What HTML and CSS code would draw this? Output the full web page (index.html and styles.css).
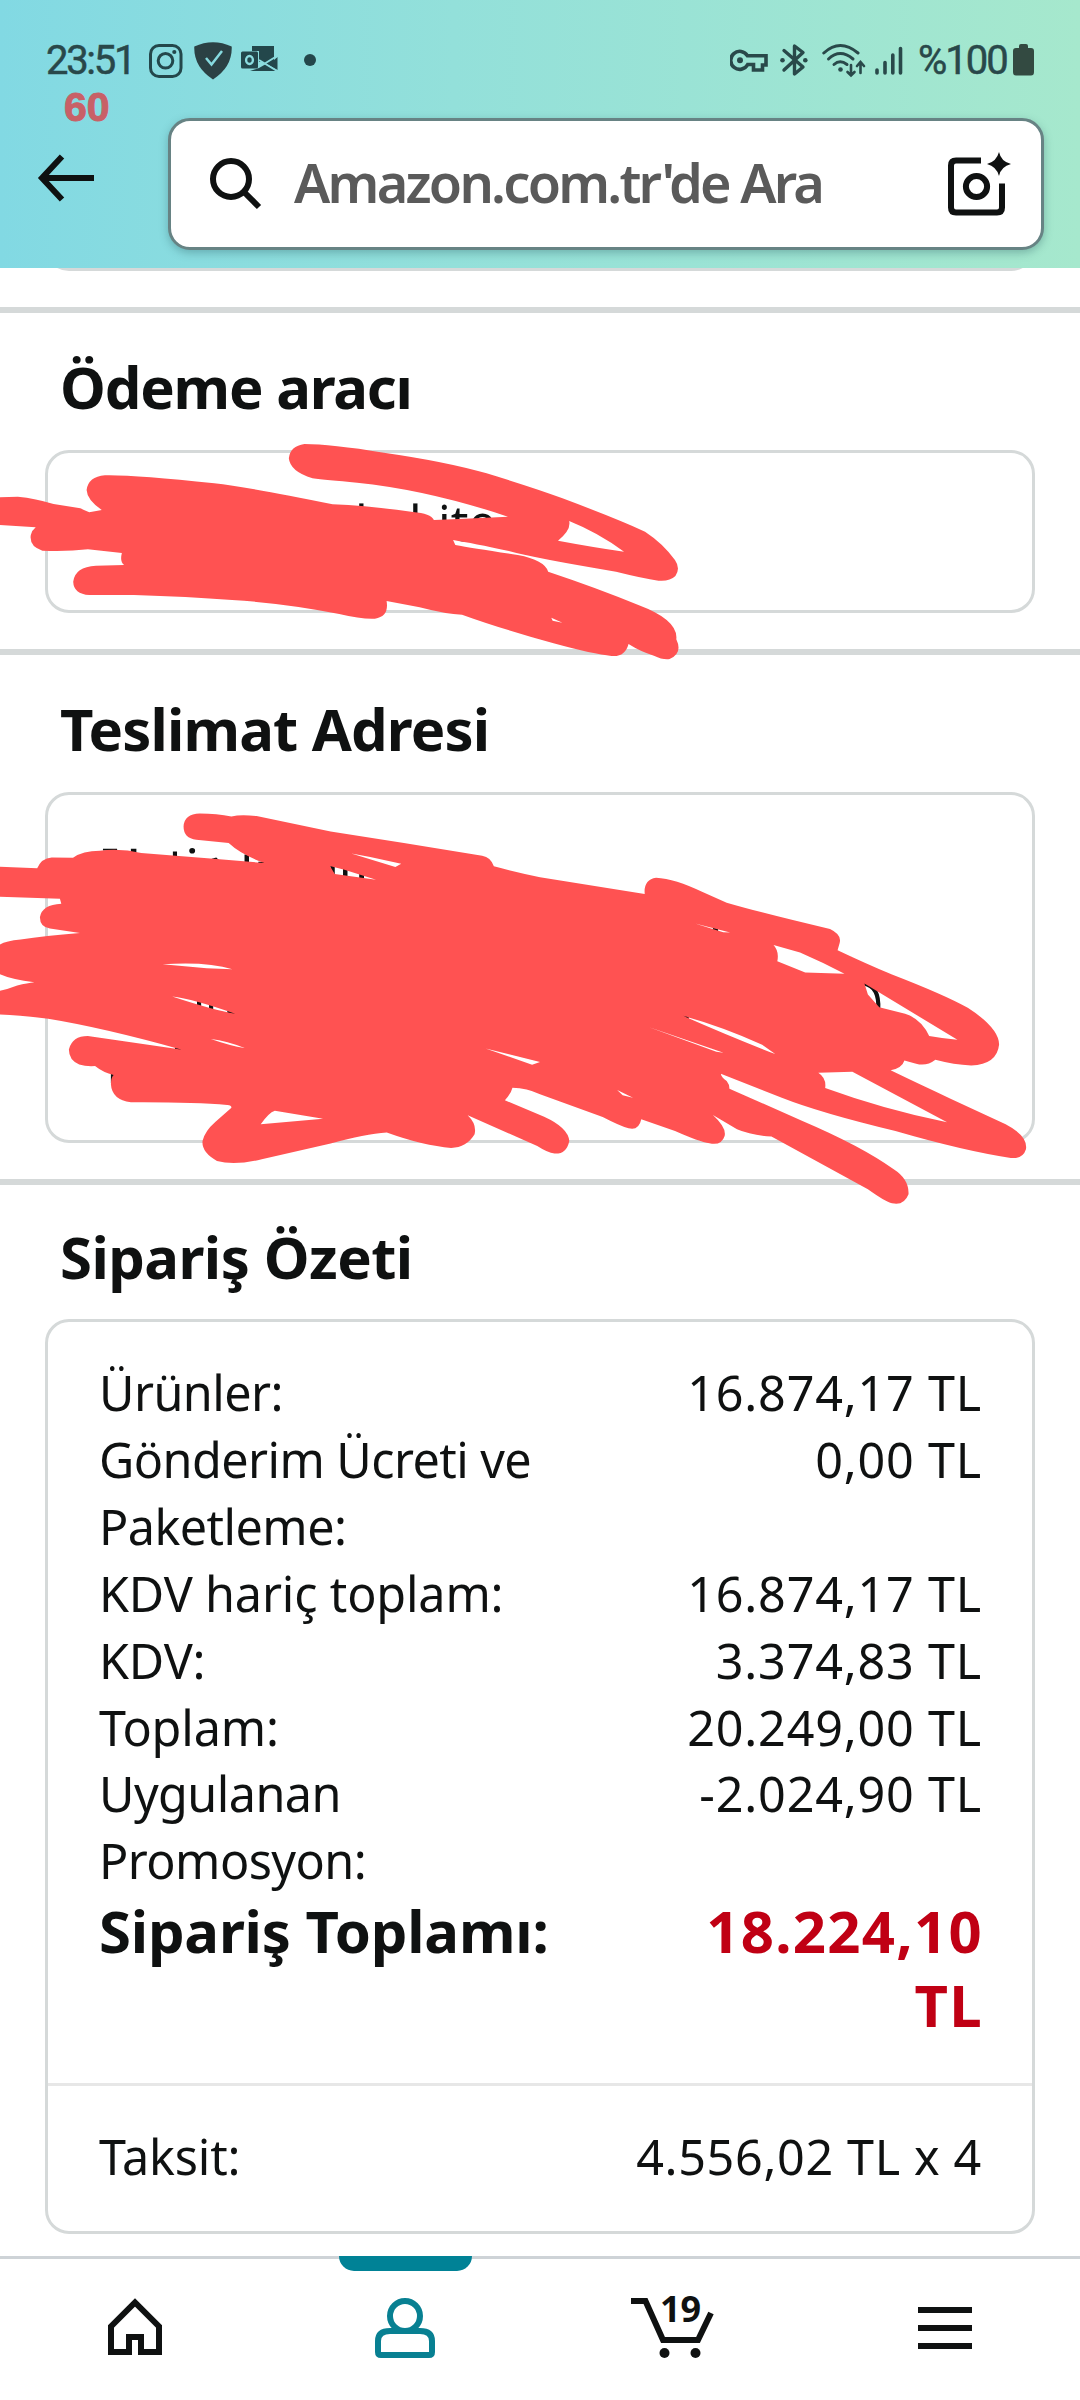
FILE: index.html
```html
<!DOCTYPE html>
<html lang="tr">
<head>
<meta charset="utf-8">
<title>Sipariş Özeti</title>
<link rel="stylesheet" href="styles.css">
</head>
<body>
<div class="page">
  <header class="header">
    <div class="status">
      <span class="clock">23:51</span>
      <svg class="ic-insta" width="34" height="34" viewBox="0 0 34 34"><rect x="1.5" y="1.5" width="30.5" height="31" rx="8.5" fill="none" stroke="#23474b" stroke-width="3"/><circle cx="16.5" cy="16.8" r="7.3" fill="none" stroke="#23474b" stroke-width="3"/><circle cx="25.3" cy="8" r="2.1" fill="#23474b"/></svg>
      <svg class="ic-shield" width="38" height="38" viewBox="0 0 38 38"><path d="M.3 4.5Q19-4 37.700 4.500Q38.500 25 19 37.500Q-.5 25 .3 4.500Z" fill="#2b4144"/><path d="M12 16L17.500 22.500L28 9" fill="none" stroke="#86dadf" stroke-width="2.500"/></svg>
      <svg class="ic-mail" width="37" height="28" viewBox="0 0 37 28"><path d="M11 0H33V14L36.500 11V24L22 16H18V5H11Z" fill="#23474b"/><path d="M9 25H36L25 18L18 22Z" fill="#23474b"/><path d="M18 14L36 25M23 18L36 10" stroke="#8bdcdf" stroke-width="2"/><rect x="0" y="5.500" width="17" height="17" rx="1.500" fill="#23474b"/><ellipse cx="8.500" cy="14" rx="3.400" ry="4" fill="none" stroke="#8bdcdf" stroke-width="2.400"/></svg>
      <span class="more-dot"></span>
      <span class="spacer"></span>
      <svg class="ic-key" width="38" height="24" viewBox="0 0 38 24"><path d="M17.500 6.800H36V16H32.500V21H23.500V15.500H17.700A9 9 0 1 1 17.500 6.800Z" fill="none" stroke="#29494a" stroke-width="3.600"/><circle cx="10" cy="11.300" r="3" fill="#29494a"/></svg>
      <svg class="ic-bt" width="28" height="34" viewBox="0 0 28 34"><path d="M4 7.500L23 24L14.500 31V3L23 9.500L4 27" fill="none" stroke="#29494a" stroke-width="3.400" stroke-linejoin="round" stroke-linecap="round"/><circle cx="2.500" cy="17.200" r="2.300" fill="#29494a"/><circle cx="25.300" cy="17.200" r="2.300" fill="#29494a"/></svg>
      <svg class="ic-wifi" width="44" height="36" viewBox="0 0 44 36"><g fill="none" stroke="#29494a" stroke-width="3" stroke-linecap="round"><path d="M1.800 11Q18-4 36 11"/><path d="M6.500 17Q18 6 31 17"/><path d="M12 22.500Q18 17 25 22.500"/><path d="M29 23V33M25.500 30L29 33.500L32.500 30M38.500 31V20.500M35 24L38.500 20L42 24" stroke-width="2.600"/></g><circle cx="18.500" cy="27.500" r="2.300" fill="#29494a"/></svg>
      <svg class="ic-signal" width="28" height="32" viewBox="0 0 28 32"><path d="M2 25V28M10 17.500V28M17.800 10V28M25.500 3.500V28" stroke="#29494a" stroke-width="3.600" stroke-linecap="round"/></svg>
      <span class="battery-text">%100</span>
      <svg class="ic-batt" width="22" height="33" viewBox="0 0 22 33"><path d="M6 4V2Q6 0 8 0H13Q15 0 15 2V4H18Q21 4 21 7V28Q21 31.500 18 31.500H3Q0 31.500 0 28V7Q0 4 3 4Z" fill="#334a41"/></svg>
    </div>
    <span class="fps">60</span>
    <div class="toolbar">
      <svg class="back" width="60" height="50" viewBox="0 0 60 50"><path d="M25 3.500L5 25L25 46.500M4 25H57" fill="none" stroke="#0f1111" stroke-width="6"/></svg>
      <div class="search">
        <svg width="54" height="54" viewBox="0 0 54 54"><circle cx="22" cy="22" r="18" fill="none" stroke="#0f1111" stroke-width="6"/><path d="M35 35L50 50" stroke="#0f1111" stroke-width="6"/></svg>
        <span class="placeholder">Amazon.com.tr'de Ara</span>
        <svg class="lens" width="66" height="66" viewBox="0 0 66 66"><path d="M35 9.500H10Q5 9.500 5 14.500V56.500Q5 61.500 10 61.500H51Q56 61.500 56 56.500V32.500" fill="none" stroke="#0f1111" stroke-width="6"/><circle cx="30.500" cy="35.500" r="10.600" fill="none" stroke="#0f1111" stroke-width="6"/><path d="M53 1Q55 10.500 65 13Q55 15.500 53 25Q50.500 15.500 41 13Q50.500 10.500 53 1Z" fill="#0f1111"/></svg>
      </div>
    </div>
  </header>

  <main class="content">
    <div class="card card-previous"></div>
    <section class="section payment">
      <h2>Ödeme aracı</h2>
      <div class="card"><span class="bit-a">l</span><span class="bit-b">l</span><span>ite</span></div>
    </section>
    <section class="section address">
      <h2>Teslimat Adresi</h2>
      <div class="card"></div>
    </section>
    <section class="section summary">
      <h2>Sipariş Özeti</h2>
      <div class="card">
        <dl class="rows">
          <dt>Ürünler:</dt><dd>16.874,17 TL</dd>
          <dt>Gönderim Ücreti ve<br>Paketleme:</dt><dd>0,00 TL</dd>
          <dt class="loose">KDV hariç toplam:</dt><dd>16.874,17 TL</dd>
          <dt class="loose">KDV:</dt><dd>3.374,83 TL</dd>
          <dt class="loose">Toplam:</dt><dd>20.249,00 TL</dd>
          <dt>Uygulanan<br>Promosyon:</dt><dd>-2.024,90 TL</dd>
          <dt class="total">Sipariş Toplamı:</dt><dd class="total price">18.224,10<br>TL</dd>
        </dl>
        <dl class="rows installment">
          <dt class="loose">Taksit:</dt><dd>4.556,02 TL x 4</dd>
        </dl>
      </div>
    </section>
  </main>

  <nav class="tabs">
    <a class="tab"><svg width="54" height="60" viewBox="0 0 54 60"><path d="M3 54V28.500L27 4.500L51 28.500V54H33V39H21V54Z" fill="none" stroke="#0f1111" stroke-width="6"/></svg></a>
    <a class="tab active"><svg width="60" height="60" viewBox="0 0 60 60"><g fill="none" stroke="#088092" stroke-width="6"><circle cx="30" cy="18" r="15"/><path d="M3 54V43Q3 33 15 33H45Q57 33 57 43V54Q57 57 54 57H6Q3 57 3 54Z" fill="#fff"/></g></svg></a>
    <a class="tab cart"><svg width="84" height="66" viewBox="0 0 84 66"><path d="M0 6H14.500L32 45H67L80 18" fill="none" stroke="#0f1111" stroke-width="6"/><circle cx="33.500" cy="58" r="5" fill="#0f1111"/><circle cx="64.500" cy="58" r="5" fill="#0f1111"/></svg><span class="count">19</span></a>
    <a class="tab"><svg width="54" height="42" viewBox="0 0 54 42"><path d="M0 3H54M0 21H54M0 39H54" stroke="#0f1111" stroke-width="6"/></svg></a>
  </nav>

  <svg class="scribbles" width="1080" height="2400" viewBox="0 0 1080 2400" fill="#ff5252" fill-rule="evenodd">
    <path transform="translate(0 300) scale(.4464 .3333)" d="M-5 592L40 590Q80 595 120 612L180 625Q190 632 200 637L228 630Q195 600 194 570Q198 530 235 526Q300 524 480 550Q560 562 745 613Q830 618 925 636Q965 640 972 660L1040 656L1138 650Q960 570 800 548Q730 540 700 535Q650 515 647 475Q650 438 682 432Q740 432 860 458Q1000 485 1090 520Q1200 565 1260 595Q1380 655 1445 695Q1485 730 1512 780Q1525 805 1513 828Q1500 845 1475 842Q1440 835 1380 815Q1200 775 1140 753Q1060 730 1015 720L1020 735Q1060 745 1160 765Q1220 780 1228 815Q1340 865 1430 915Q1520 960 1515 1018Q1530 1060 1500 1077Q1485 1080 1465 1067Q1435 1055 1408 1032Q1400 1072 1370 1068Q1330 1063 1240 1030Q1120 985 1035 944Q1000 943 940 922L866 903Q872 950 840 956Q810 958 760 942Q640 910 520 900Q420 890 300 885H200Q165 882 164 845Q168 800 215 797L278 795Q268 785 273 759L197 748Q150 755 95 752Q65 740 69 705Q72 690 80 682L-5 675ZM1275 663Q1340 698 1398 755Q1330 742 1250 722Q1280 690 1275 663ZM1235 953L1260 968L1238 962Z"/>
    <g transform="translate(0 680) scale(.3444 .3328)">
      <g fill="#0f1111">
        <path d="M299 507H340V512H299ZM380 507H396V530H380ZM502 515H514V540H502ZM710 524H723V560H710ZM615 537L628 533L640 545H615ZM750 546H768V556H750ZM322 1180H335L325 1212H322ZM508 1102L526 1108V1115H508Z"/>
        <circle cx="558" cy="513" r="8.500"/>
        <path d="M958 557H972V585H965ZM996 565H1009V592H996ZM1043 580H1057V602H1043ZM572 960H584V985H572ZM607 970H619V995H607ZM660 990H683V1005H660ZM2070 740H2085V760H2070ZM1983 1005H2000V1020H1983Z"/>
        <path d="M2508 912Q2554 920 2550 990" fill="none" stroke="#0f1111" stroke-width="12"/>
      </g>
      <path d="M-5 561L108 566Q120 535 150 533L212 534Q240 513 290 513Q350 505 410 520L620 537L768 550Q700 525 664 490L570 480Q533 475 533 440Q535 402 580 401Q630 401 672 410Q700 403 745 409L960 455Q1180 490 1400 528Q1425 532 1434 560Q1490 575 1568 593L1872 643Q1868 600 1905 594Q1960 597 2040 637L2110 669Q2220 702 2410 748Q2445 765 2438 790L2432 812Q2520 855 2590 885Q2740 945 2810 985Q2900 1045 2901 1095Q2895 1155 2820 1158Q2770 1156 2716 1141Q2690 1162 2660 1153L2626 1143Q2620 1165 2586 1173Q2680 1220 2760 1258L2920 1335Q2985 1370 2979 1410Q2970 1440 2935 1436Q2800 1415 2600 1355Q2380 1300 2270 1255L2093 1183Q2095 1195 2110 1205Q2118 1215 2118 1228L2330 1325Q2500 1400 2595 1470Q2640 1500 2638 1545Q2625 1580 2590 1572Q2570 1567 2520 1530L2240 1372Q2180 1368 2140 1350L2070 1307Q2110 1345 2104 1370Q2095 1400 2060 1392Q2030 1387 1960 1355L1862 1320Q1855 1355 1825 1347Q1800 1340 1750 1313L1568 1245Q1530 1225 1488 1225Q1485 1240 1466 1263L1580 1312Q1650 1345 1653 1385Q1645 1425 1610 1423Q1590 1420 1560 1400L1358 1308Q1385 1335 1378 1365Q1355 1405 1310 1406Q1230 1400 1123 1360Q1060 1365 960 1393L760 1440Q680 1460 630 1445Q585 1420 588 1385Q595 1355 625 1328L672 1285Q672 1277 660 1277Q560 1268 380 1269Q325 1262 322 1215Q322 1195 330 1187Q300 1180 276 1160Q250 1162 230 1155Q200 1142 200 1110Q210 1070 255 1070L510 1108L528 1111Q300 1045 140 1018Q60 1007-5 1005V935Q20 930 50 918Q80 910 100 908Q30 900-5 882V798Q10 785 60 780Q130 768 232 760L145 747Q115 742 116 712Q122 675 178 672L174 657L-5 651Z
M1020 521L1075 532L1165 552L1148 562ZM958 559L1000 570L1092 600L972 583ZM472 854Q600 845 675 869L600 866ZM500 951Q560 958 683 1003Q620 992 500 951ZM612 1079Q660 1085 710 1106Q670 1100 612 1079ZM1410 1107L1568 1148L1545 1156ZM2018 732L2120 759L2100 758ZM2246 796Q2263 815 2257 845L2338 879L2452 883Q2388 848 2323 819ZM2510 912L2780 1081Q2740 1078 2698 1070Q2675 1018 2628 1003L2553 983L2520 945ZM1983 1009Q2098 1042 2213 1096L2251 1124Q2128 1075 1983 1009ZM1883 1043L2101 1120L2080 1117ZM2376 1180L2475 1177L2750 1329Q2568 1291 2396 1226Q2400 1196 2376 1180ZM1792 1232L1838 1255L1808 1248ZM757 1335Q780 1300 798 1294L938 1318Z"/>
    </g>
  </svg>
</div>
</body>
</html>
```
FILE: styles.css
```css
* { box-sizing: border-box; }
body {
  margin: 0;
  background: #fff;
  color: #0f1111;
  font-family: "Noto Sans", "Open Sans", sans-serif;
}
.page {
  position: relative;
  display: flex;
  flex-direction: column;
  width: 1080px;
  height: 2400px;
  overflow: hidden;
}
.header {
  position: relative;
  flex: none;
  height: 268px;
  background: linear-gradient(90deg, #82d9e3 0%, #93e0da 42%, #a6e8cd 100%);
}
.status {
  display: flex;
  align-items: flex-start;
  height: 118px;
  padding: 42px 45px 0 46px;
  color: #29484a;
}
.clock, .battery-text {
  padding-top: 1px;
  font: 400 40px/36px Roboto, sans-serif;
  -webkit-text-stroke: .5px currentColor;
  white-space: nowrap;
}
.clock { width: 103px; letter-spacing: -2.3px; }
.battery-text { width: 95px; letter-spacing: -2px; }
.ic-insta { margin-top: 2px; }
.ic-shield { margin-left: 11px; }
.ic-mail { margin: 4px 0 0 9px; }
.more-dot {
  width: 12px;
  height: 12px;
  margin: 12px 0 0 26px;
  border-radius: 50%;
  background: #23474b;
}
.spacer { flex: 1; }
.status svg { flex: none; }
.ic-key { margin: 7px 12px 0 0; }
.ic-bt { margin: 1px 14px 0 0; }
.ic-wifi { margin-right: 9px; }
.ic-signal { margin: 3px 15px 0 0; }
.ic-batt { margin-top: 2px; }
.fps {
  position: absolute;
  left: 64px;
  top: 87px;
  color: #c86067;
  font: 700 41px/40px "Liberation Sans", sans-serif;
  -webkit-text-stroke: 1px currentColor;
}
.toolbar { display: flex; align-items: flex-start; }
.back { margin: 35px 73px 0 37px; }
.search {
  display: flex;
  align-items: center;
  width: 876px;
  height: 132px;
  margin-left: -2px;
  padding: 0 29px 0 38px;
  border: 3px solid #678384;
  border-radius: 22px;
  background: #fff;
  box-shadow: 0 3px 9px rgba(40, 90, 95, .35);
}
.placeholder {
  flex: 1;
  margin: -4px 0 0 31px;
  color: #5a5a5a;
  font-size: 54px;
  font-weight: 600;
  line-height: 74px;
  letter-spacing: -2.75px;
  white-space: nowrap;
}
.content { flex: 1; min-height: 0; overflow: hidden; }
.card {
  margin: 0 45px;
  border: 3px solid #d5d9d9;
  border-radius: 24px;
}
.card-previous { height: 60px; margin-top: -57px; margin-bottom: 36px; }
.section { border-top: 6px solid #d5d9d9; }
h2 {
  margin: 0 60px;
  padding: 37px 0 26px;
  font-size: 58px;
  font-weight: 700;
  line-height: 74px;
  letter-spacing: -1.2px;
}
.payment .card {
  display: flex;
  height: 163px;
  padding: 36px 0 0 307px;
  font-size: 49px;
  line-height: 67px;
}
.bit-a { width: 54px; }
.bit-b { width: 29px; }
.payment { height: 342px; }
.address { height: 530px; }
.address h2 { letter-spacing: -.85px; }
.address .card { height: 351px; }
.summary h2 { padding: 35px 0 25px; letter-spacing: -.55px; }
.rows {
  display: grid;
  grid-template-columns: 1fr auto;
  margin: 0;
  padding: 37px 51px 41px;
  font-size: 48.5px;
  line-height: 66.9px;
}
.rows dt { letter-spacing: -.55px; }
.rows .loose { letter-spacing: -.15px; }
.rows dd { margin: 0 -1px 0 0; text-align: right; letter-spacing: .8px; }
.rows .total { font-size: 58px; font-weight: 700; line-height: 74px; letter-spacing: -.2px; }
.rows .price { color: #c00014; letter-spacing: 1.3px; margin-right: -2px; }
.installment { border-top: 3px solid #e7e7e7; padding-bottom: 41px; }
.installment dd { letter-spacing: .65px; }
.tabs {
  display: grid;
  grid-template-columns: repeat(4, 1fr);
  flex: none;
  height: 144px;
  border-top: 3px solid #ced3d7;
  background: #fff;
}
.tab {
  position: relative;
  display: flex;
  align-items: center;
  justify-content: center;
  height: 138px;
}
.active::before {
  content: "";
  position: absolute;
  top: -3px;
  left: 69px;
  width: 133px;
  height: 15px;
  border-radius: 0 0 15px 15px;
  background: #008296;
}
.cart svg { margin-left: -4px; }
.count {
  position: absolute;
  left: 120px;
  top: 28px;
  font-size: 36px;
  font-weight: 700;
  line-height: 44px;
}
.scribbles { position: absolute; left: 0; top: 0; pointer-events: none; }
```
